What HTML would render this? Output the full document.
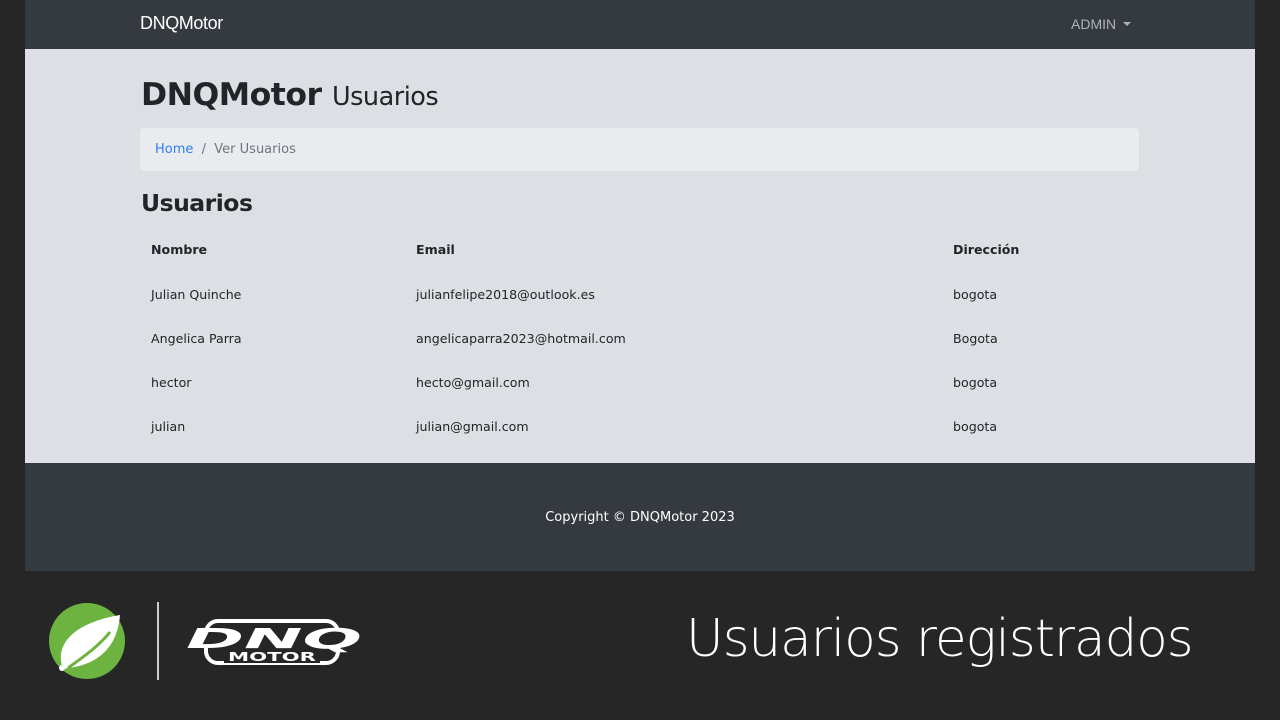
<!DOCTYPE html>
<html><head><meta charset="utf-8"><style>
*{margin:0;padding:0;box-sizing:border-box}
body{width:1280px;height:720px;background:#262626;font-family:"Liberation Sans","DejaVu Sans",sans-serif;position:relative;overflow:hidden}
.nav{position:absolute;left:25px;top:0;width:1230px;height:49px;background:#343a40}
.brand{position:absolute;left:115px;top:13px;color:#fff;font-size:18px;letter-spacing:-0.4px}
.admin{position:absolute;left:1046px;top:16px;color:#aeb3b8;font-size:14px}
.admin:after{content:"";display:inline-block;margin-left:7px;vertical-align:3px;border-top:4px solid #aeb3b8;border-left:4px solid transparent;border-right:4px solid transparent}
.main{position:absolute;left:25px;top:49px;width:1230px;height:414px;background:#dcdfe3;color:#212529}
h1{position:absolute;left:116px;top:28px;font-size:31.5px;font-weight:bold;font-family:"DejaVu Sans",sans-serif;letter-spacing:-0.5px}
h1 span{font-weight:normal;font-size:25.5px}
.bc{position:absolute;left:115px;top:79px;width:999px;height:43px;background:#e9ecef;border-radius:4px;font-size:13px;padding:14px 15px;color:#6c757d;font-family:"DejaVu Sans",sans-serif}
.bc a{color:#2f7ef2}
h2{position:absolute;left:116px;top:140px;font-size:23.5px;font-family:"DejaVu Sans",sans-serif;font-weight:bold;letter-spacing:-0.5px}
.t{position:absolute;font-size:12.6px;font-family:"DejaVu Sans",sans-serif}
.b{font-weight:bold}
.foot{position:absolute;left:25px;top:463px;width:1230px;height:108px;background:#343a40}
.foot div{position:absolute;width:100%;top:47px;text-align:center;color:#fff;font-size:13px;font-family:"DejaVu Sans",sans-serif}
.cap{position:absolute;left:686px;top:609px;color:#fff;font-size:51.5px;font-family:"DejaVu Sans",sans-serif;font-weight:200;letter-spacing:-1px}
</style></head><body>
<div class="nav"><div class="brand">DNQMotor</div><div class="admin">ADMIN</div></div>
<div class="main">
<h1>DNQMotor <span>Usuarios</span></h1>
<div class="bc"><a>Home</a> &nbsp;/&nbsp; Ver Usuarios</div>
<h2>Usuarios</h2>
<div class="t b" style="left:126px;top:193px">Nombre</div>
<div class="t b" style="left:391px;top:193px">Email</div>
<div class="t b" style="left:928px;top:193px">Dirección</div>
<div class="t" style="left:126px;top:238px">Julian Quinche</div><div class="t" style="left:391px;top:238px">julianfelipe2018@outlook.es</div><div class="t" style="left:928px;top:238px">bogota</div>
<div class="t" style="left:126px;top:282px">Angelica Parra</div><div class="t" style="left:391px;top:282px">angelicaparra2023@hotmail.com</div><div class="t" style="left:928px;top:282px">Bogota</div>
<div class="t" style="left:126px;top:326px">hector</div><div class="t" style="left:391px;top:326px">hecto@gmail.com</div><div class="t" style="left:928px;top:326px">bogota</div>
<div class="t" style="left:126px;top:370px">julian</div><div class="t" style="left:391px;top:370px">julian@gmail.com</div><div class="t" style="left:928px;top:370px">bogota</div>
</div>
<div class="foot"><div>Copyright © DNQMotor 2023</div></div>
<svg style="position:absolute;left:48px;top:602px" width="80" height="78" viewBox="0 0 80 78">
<circle cx="39" cy="39" r="38" fill="#6db33f"/>
<path d="M15 67 C5 40 30 20 72 13 C70 40 55 62 20 66 Z" fill="#fff"/>
<path d="M20 66 C35 55 50 45 62 30" stroke="#6db33f" stroke-width="3" fill="none"/>
<circle cx="14" cy="66" r="3" fill="#fff"/>
</svg>
<div style="position:absolute;left:157px;top:602px;width:2px;height:78px;background:#ccc"></div>
<svg style="position:absolute;left:184px;top:618px" width="180" height="48" viewBox="0 0 180 48">
<rect x="22" y="3" width="132" height="42" rx="12" fill="none" stroke="#fff" stroke-width="4"/>
<rect x="0" y="10" width="180" height="20" fill="#262626"/>
<text x="2" y="30" textLength="176" lengthAdjust="spacingAndGlyphs" fill="#fff" font-family="DejaVu Sans" font-weight="bold" font-style="italic" font-size="28">DNQ</text>
<rect x="40" y="31" width="96" height="14" fill="#262626"/>
<text x="44" y="43" textLength="88" lengthAdjust="spacingAndGlyphs" fill="#fff" font-family="DejaVu Sans" font-weight="bold" font-size="12">MOTOR</text>
</svg>
<div class="cap">Usuarios registrados</div>
</body></html>
